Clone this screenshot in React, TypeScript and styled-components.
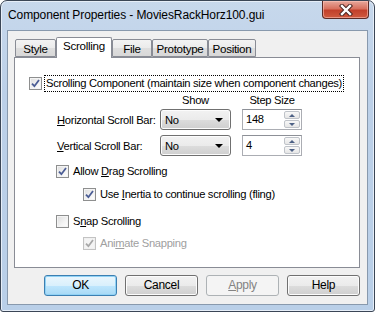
import React from "react";
import styled, { createGlobalStyle } from "styled-components";

const GlobalStyle = createGlobalStyle`
	html, body {
		margin: 0;
		padding: 0;
		background: #ffffff;
	}
	body {
		font-family: "Liberation Sans", Arial, sans-serif;
		font-size: 11.2px;
		letter-spacing: -0.3px;
		color: #000000;
	}
`;

const Window = styled.div`
	box-sizing: border-box;
	width: 375px;
	height: 312px;
	display: flex;
	flex-direction: column;
	border: 1px solid #3b4656;
	border-radius: 7px 7px 3px 3px;
	background: linear-gradient(180deg, #c7d8ec 0%, #bcd0e8 30%, #b9cfe8 100%);
	box-shadow: inset 0 0 0 1px #e6eef8;
	overflow: hidden;
`;

const TitleBar = styled.div`
	height: 29px;
	display: flex;
	align-items: flex-start;
	flex-shrink: 0;
`;

const Title = styled.div`
	padding: 7px 0 0 7px;
	line-height: 14px;
	font-size: 12px;
	letter-spacing: -0.1px;
	white-space: nowrap;
`;

const CloseButton = styled.div`
	margin-left: auto;
	margin-right: 5px;
	width: 47px;
	height: 18px;
	box-sizing: border-box;
	border: 1px solid #5b2b26;
	border-top: 0;
	border-radius: 0 0 4px 4px;
	background: linear-gradient(180deg, #e7a89c 0%, #d8715f 45%, #c2402b 55%, #cf5a3f 100%);
	box-shadow: inset 0 0 0 1px rgba(255, 200, 190, 0.55);
	display: flex;
	align-items: center;
	justify-content: center;
`;

const Client = styled.div`
	flex: 1;
	margin: 0 6px 6px;
	border: 1px solid #8899ad;
	background: #f0f0f0;
	display: flex;
	flex-direction: column;
`;

const TabStrip = styled.div`
	display: flex;
	align-items: flex-end;
	height: 20px;
	padding: 6px 0 0 7px;
	position: relative;
	z-index: 1;
`;

const Tab = styled.div<{ $active?: boolean; $w: number }>`
	box-sizing: border-box;
	width: ${(p) => p.$w}px;
	height: ${(p) => (p.$active ? 21 : 18)}px;
	margin-bottom: ${(p) => (p.$active ? -1 : 0)}px;
	border: 1px solid #898c95;
	border-bottom: ${(p) => (p.$active ? "0" : "1px solid #898c95")};
	border-radius: 2px 2px 0 0;
	background: ${(p) =>
		p.$active ? "#ffffff" : "linear-gradient(180deg, #f3f3f3 0%, #ebebeb 50%, #dedede 51%, #d8d8d8 100%)"};
	display: flex;
	justify-content: center;
	padding-top: ${(p) => (p.$active ? 1 : 2)}px;
	line-height: 14px;
	font-size: 11.6px;
	white-space: nowrap;
`;

const Panel = styled.div`
	box-sizing: border-box;
	margin: 0 7px 0 6px;
	height: 211px;
	border: 1px solid #898c95;
	background: #ffffff;
	display: flex;
	flex-direction: column;
	padding: 17px 0 0 14px;
`;

const CheckRow = styled.div<{ $indent?: number; $top?: number }>`
	display: flex;
	align-items: center;
	height: 17px;
	margin-left: ${(p) => p.$indent ?? 0}px;
	margin-top: ${(p) => p.$top ?? 0}px;
	gap: 3px;
`;

const Box = styled.div<{ $disabled?: boolean }>`
	box-sizing: border-box;
	width: 13px;
	height: 13px;
	border: 1px solid ${(p) => (p.$disabled ? "#c3c3c3" : "#8e8f8f")};
	background: ${(p) =>
		p.$disabled
			? "#f4f4f4"
			: "linear-gradient(135deg, #dcdcdc 0%, #f4f4f4 60%, #ffffff 100%)"};
	box-shadow: inset 0 0 0 1px ${(p) => (p.$disabled ? "#f0f0f0" : "#f4f4f4")};
	display: flex;
	align-items: center;
	justify-content: center;
	flex-shrink: 0;
`;

const Label = styled.span<{ $disabled?: boolean; $focus?: boolean }>`
	color: ${(p) => (p.$disabled ? "#a0a0a0" : "#000000")};
	line-height: 15px;
	white-space: nowrap;
	padding: 0 1px;
	border: 1px dotted ${(p) => (p.$focus ? "#000000" : "transparent")};
	margin-left: -1px;
`;

const HeadRow = styled.div`
	display: flex;
	height: 14px;
	margin: 1px 0 0 28px;
	line-height: 14px;
`;

const FieldRow = styled.div<{ $top: number }>`
	display: flex;
	align-items: center;
	height: 21px;
	margin: ${(p) => p.$top}px 0 0 28px;
`;

const FieldLabel = styled.div`
	width: 103px;
	white-space: nowrap;
`;

const HeadCell = styled.div<{ $w: number; $gap?: number }>`
	width: ${(p) => p.$w}px;
	margin-right: ${(p) => p.$gap ?? 0}px;
	text-align: center;
`;

const Combo = styled.div`
	box-sizing: border-box;
	width: 71px;
	height: 21px;
	margin-right: 11px;
	border: 1px solid #707070;
	border-radius: 3px;
	background: linear-gradient(180deg, #f2f2f2 0%, #ebebeb 50%, #dddddd 51%, #cfcfcf 100%);
	box-shadow: inset 0 0 0 1px #fcfcfc;
	display: flex;
	align-items: center;
	padding: 0 7px 0 4px;
	justify-content: space-between;
`;

const Arrow = styled.div`
	width: 0;
	height: 0;
	border-left: 4px solid transparent;
	border-right: 4px solid transparent;
	border-top: 4px solid #000000;
`;

const Spin = styled.div`
	box-sizing: border-box;
	width: 60px;
	height: 21px;
	border: 1px solid #abadb3;
	border-top-color: #8d9097;
	background: #ffffff;
	display: flex;
`;

const SpinText = styled.div`
	flex: 1;
	padding: 2px 0 0 3px;
	line-height: 15px;
`;

const SpinButtons = styled.div`
	width: 16px;
	display: flex;
	flex-direction: column;
	gap: 1px;
	padding: 1px;
`;

const SpinHalf = styled.div`
	flex: 1;
	border: 1px solid #bfc3c9;
	border-radius: 2px;
	background: linear-gradient(180deg, #f8f8f8 0%, #e6e6e6 100%);
	display: flex;
	align-items: center;
	justify-content: center;
`;

const TinyArrow = styled.div<{ $up?: boolean }>`
	width: 0;
	height: 0;
	border-left: 3px solid transparent;
	border-right: 3px solid transparent;
	${(p) => (p.$up ? "border-bottom: 3px solid #4d6185;" : "border-top: 3px solid #4d6185;")}
`;

const ButtonRow = styled.div`
	display: flex;
	gap: 8px;
	margin: 7px 0 0 36px;
`;

const Button = styled.div<{ $default?: boolean; $disabled?: boolean }>`
	box-sizing: border-box;
	width: 73px;
	height: 21px;
	border-radius: 3px;
	border: 1px solid ${(p) => (p.$default ? "#3c7fb1" : p.$disabled ? "#adb2b5" : "#707070")};
	background: ${(p) =>
		p.$default
			? "linear-gradient(180deg, #eaf6fd 0%, #d9f0fc 50%, #bee6fd 51%, #a7d9f5 100%)"
			: p.$disabled
			? "#f4f4f4"
			: "linear-gradient(180deg, #f2f2f2 0%, #ebebeb 50%, #dddddd 51%, #cfcfcf 100%)"};
	box-shadow: inset 0 0 0 1px ${(p) => (p.$default ? "#90d2f5" : p.$disabled ? "#f4f4f4" : "#fcfcfc")};
	color: ${(p) => (p.$disabled ? "#838383" : "#000000")};
	display: flex;
	align-items: center;
	justify-content: center;
	line-height: 15px;
	font-size: 12px;
`;

const Check: React.FC<{ on?: boolean; disabled?: boolean }> = ({ on, disabled }) => (
	<Box $disabled={disabled}>
		{on && (
			<svg width="9" height="9" viewBox="0 0 9 9">
				<path
					d="M1 4.6 L3.4 7.2 L8 1"
					fill="none"
					stroke={disabled ? "#a8a8a8" : "#4b5d95"}
					strokeWidth="1.8"
					strokeLinejoin="miter"
				/>
			</svg>
		)}
	</Box>
);

const App: React.FC = () => {
	return (
		<>
			<GlobalStyle />
			<Window>
				<TitleBar>
					<Title>Component Properties - MoviesRackHorz100.gui</Title>
					<CloseButton>
						<svg width="14" height="12" viewBox="0 0 14 12">
							<path d="M3 2 L11 10 M11 2 L3 10" stroke="#4a2420" strokeWidth="4.4" strokeLinecap="square" />
							<path d="M3 2 L11 10 M11 2 L3 10" stroke="#ffffff" strokeWidth="2.4" strokeLinecap="square" />
						</svg>
					</CloseButton>
				</TitleBar>
				<Client>
					<TabStrip>
						<Tab $w={41}>Style</Tab>
						<Tab $w={56} $active>
							Scrolling
						</Tab>
						<Tab $w={40}>File</Tab>
						<Tab $w={56}>Prototype</Tab>
						<Tab $w={48}>Position</Tab>
					</TabStrip>
					<Panel>
						<CheckRow>
							<Check on />
							<Label $focus>Scrolling Component (maintain size when component changes)</Label>
						</CheckRow>
						<HeadRow>
							<HeadCell $w={103} />
							<HeadCell $w={71} $gap={11}>
								Show
							</HeadCell>
							<HeadCell $w={60}>Step Size</HeadCell>
						</HeadRow>
						<FieldRow $top={2}>
							<FieldLabel>
								<u>H</u>orizontal Scroll Bar:
							</FieldLabel>
							<Combo>
								<span>No</span>
								<Arrow />
							</Combo>
							<Spin>
								<SpinText>148</SpinText>
								<SpinButtons>
									<SpinHalf>
										<TinyArrow $up />
									</SpinHalf>
									<SpinHalf>
										<TinyArrow />
									</SpinHalf>
								</SpinButtons>
							</Spin>
						</FieldRow>
						<FieldRow $top={5}>
							<FieldLabel>
								<u>V</u>ertical Scroll Bar:
							</FieldLabel>
							<Combo>
								<span>No</span>
								<Arrow />
							</Combo>
							<Spin>
								<SpinText>4</SpinText>
								<SpinButtons>
									<SpinHalf>
										<TinyArrow $up />
									</SpinHalf>
									<SpinHalf>
										<TinyArrow />
									</SpinHalf>
								</SpinButtons>
							</Spin>
						</FieldRow>
						<CheckRow $indent={27} $top={7}>
							<Check on />
							<Label>
								Allow <u>D</u>rag Scrolling
							</Label>
						</CheckRow>
						<CheckRow $indent={54} $top={6}>
							<Check on />
							<Label>
								Use <u>I</u>nertia to continue scrolling (fling)
							</Label>
						</CheckRow>
						<CheckRow $indent={27} $top={10}>
							<Check />
							<Label>
								S<u>n</u>ap Scrolling
							</Label>
						</CheckRow>
						<CheckRow $indent={54} $top={5}>
							<Check on disabled />
							<Label $disabled>
								Ani<u>m</u>ate Snapping
							</Label>
						</CheckRow>
					</Panel>
					<ButtonRow>
						<Button $default>OK</Button>
						<Button>Cancel</Button>
						<Button $disabled>
							<u>A</u>pply
						</Button>
						<Button>Help</Button>
					</ButtonRow>
				</Client>
			</Window>
		</>
	);
};

export default App;
